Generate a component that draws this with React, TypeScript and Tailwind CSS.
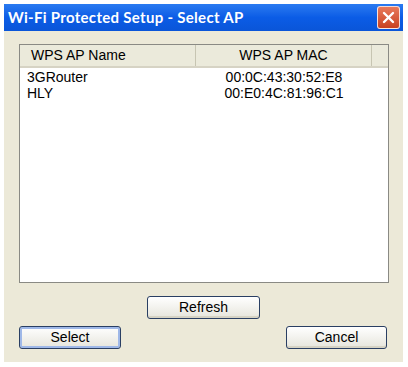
const rows = [
  { name: "3GRouter", mac: "00:0C:43:30:52:E8" },
  { name: "HLY", mac: "00:E0:4C:81:96:C1" },
];

function XpButton({
  label,
  width,
  isDefault,
}: {
  label: string;
  width: string;
  isDefault?: boolean;
}) {
  return (
    <button
      className={`${width} h-[23px] rounded-[3px] border border-[#2a3f63] bg-gradient-to-b from-white to-[#e6e5dc] text-[14px] text-black ${
        isDefault ? "shadow-[inset_0_0_0_2px_#9fb8e8]" : "shadow-[inset_0_-2px_0_#d6d3c4]"
      }`}
    >
      {label}
    </button>
  );
}

export default function App() {
  return (
    <div
      className="w-[408px] h-[367px] bg-white pt-[4px] pl-[4px] pr-[5px]"
      style={{ fontFamily: '"Liberation Sans", Arial, sans-serif' }}
    >
      {/* Title bar */}
      <div className="h-[27px] flex items-center justify-between pl-[4px] pr-[3px] bg-gradient-to-b from-[#2a7af0] via-[#0b5ce6] to-[#0a55d8]">
        <span
          className="text-white font-bold text-[15px] tracking-[0.3px]"
          style={{ fontFamily: 'Lato, "DejaVu Sans", sans-serif' }}
        >
          Wi-Fi Protected Setup - Select AP
        </span>
        <div className="w-[23px] h-[23px] rounded-[3px] border border-white/80 bg-gradient-to-b from-[#e8795a] to-[#c8401f] flex items-center justify-center">
          <svg width="13" height="13" viewBox="0 0 13 13">
            <path
              d="M2 2L11 11M11 2L2 11"
              stroke="white"
              strokeWidth="2.4"
              strokeLinecap="round"
            />
          </svg>
        </div>
      </div>

      {/* Body */}
      <div className="h-[331px] bg-[#ece9d8] pt-[13px] px-[15px]">
        <div className="h-[239px] w-[370px] border border-[#8a8a84] bg-white flex flex-col">
          <div className="flex h-[23px] bg-[#ebeadb] border-b-[2px] border-[#d6d3c4] text-[14px] text-black">
            <div className="w-[176px] pl-[11px] flex items-center border-r border-[#c7c5b2]">
              WPS AP Name
            </div>
            <div className="w-[176px] flex items-center justify-center border-r border-[#c7c5b2]">
              WPS AP MAC
            </div>
            <div className="flex-1" />
          </div>
          <div className="pt-[1px] text-[14px] leading-[16px] text-black">
            {rows.map((r) => (
              <div key={r.mac} className="flex">
                <div className="w-[176px] pl-[7px]">{r.name}</div>
                <div className="w-[176px] text-center">{r.mac}</div>
              </div>
            ))}
          </div>
        </div>

        <div className="flex justify-center mt-[13px]">
          <XpButton label="Refresh" width="w-[113px]" />
        </div>
        <div className="flex justify-between mt-[7px] pr-[1px]">
          <XpButton label="Select" width="w-[102px]" isDefault />
          <XpButton label="Cancel" width="w-[101px]" />
        </div>
      </div>
    </div>
  );
}
